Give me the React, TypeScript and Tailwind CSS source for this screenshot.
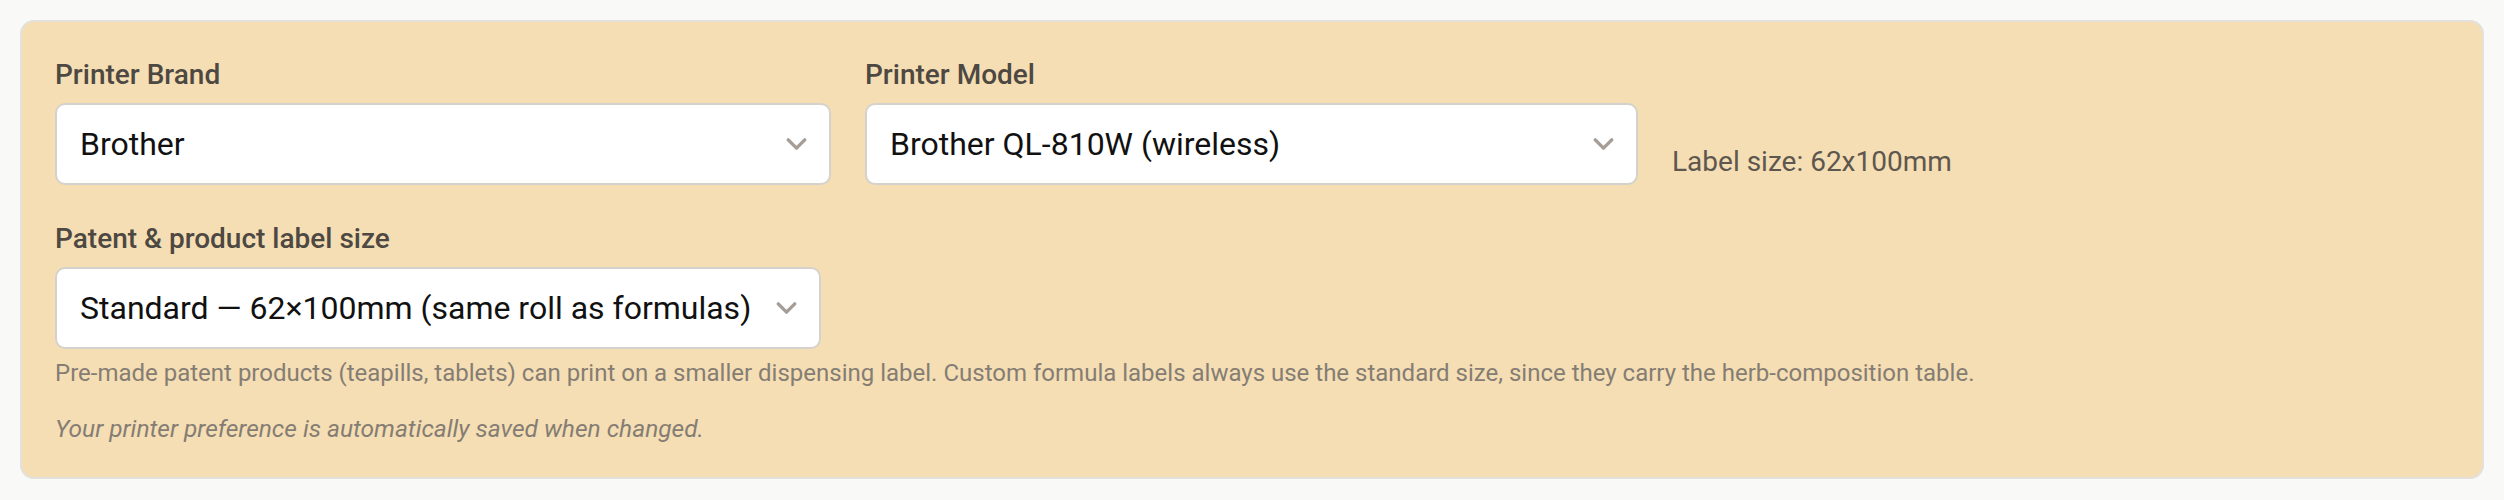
import React from "react";

function Chevron() {
  return (
    <svg
      className="pointer-events-none absolute right-[18px] top-1/2 -translate-y-1/2"
      width="33"
      height="33"
      viewBox="0 0 24 24"
      fill="none"
      stroke="#a59d96"
      strokeWidth="2.5"
      strokeLinecap="round"
      strokeLinejoin="round"
    >
      <path d="m6 9 6 6 6-6" />
    </svg>
  );
}

function SelectBox({ value, widthClass }: { value: string; widthClass: string }) {
  return (
    <div className={"relative " + widthClass}>
      <select
        defaultValue={value}
        className="h-[82px] w-full appearance-none rounded-[10px] border-2 border-[#d5d2cd] bg-white pl-[23px] pr-[60px] text-[32px] text-[#111] outline-none font-[Roboto,sans-serif]"
      >
        <option value={value}>{value}</option>
      </select>
      <Chevron />
    </div>
  );
}

export default function App() {
  return (
    <div className="min-h-[500px] bg-[#f9f9f7] p-[20px] font-[Roboto,sans-serif]">
      <div className="rounded-[14px] border-2 border-[#e4e1dc] bg-[#f5deb3] px-[33px] pt-[32px] pb-[31px]">
        <div className="flex items-end gap-[34px]">
          <div>
            <label className="mb-[7px] block text-[28px] font-medium leading-[42px] text-[#4d4842]">
              Printer Brand
            </label>
            <SelectBox value="Brother" widthClass="w-[776px]" />
          </div>
          <div>
            <label className="mb-[7px] block text-[28px] font-medium leading-[42px] text-[#4d4842]">
              Printer Model
            </label>
            <SelectBox value="Brother QL-810W (wireless)" widthClass="w-[773px]" />
          </div>
          <p className="pb-[2px] text-[28px] leading-[42px] text-[#5d574f]">Label size: 62x100mm</p>
        </div>

        <div className="mt-[33px]">
          <label className="mb-[7px] block text-[28px] font-medium leading-[42px] text-[#4d4842]">
            Patent &amp; product label size
          </label>
          <SelectBox value="Standard — 62×100mm (same roll as formulas)" widthClass="w-[766px]" />
        </div>

        <p className="mt-[7px] text-[24px] leading-[35px] text-[#857d74]">
          Pre-made patent products (teapills, tablets) can print on a smaller dispensing label. Custom formula labels
          always use the standard size, since they carry the herb-composition table.
        </p>
        <p className="mt-[20px] text-[24.5px] italic leading-[35px] text-[#857d74]">
          Your printer preference is automatically saved when changed.
        </p>
      </div>
    </div>
  );
}
